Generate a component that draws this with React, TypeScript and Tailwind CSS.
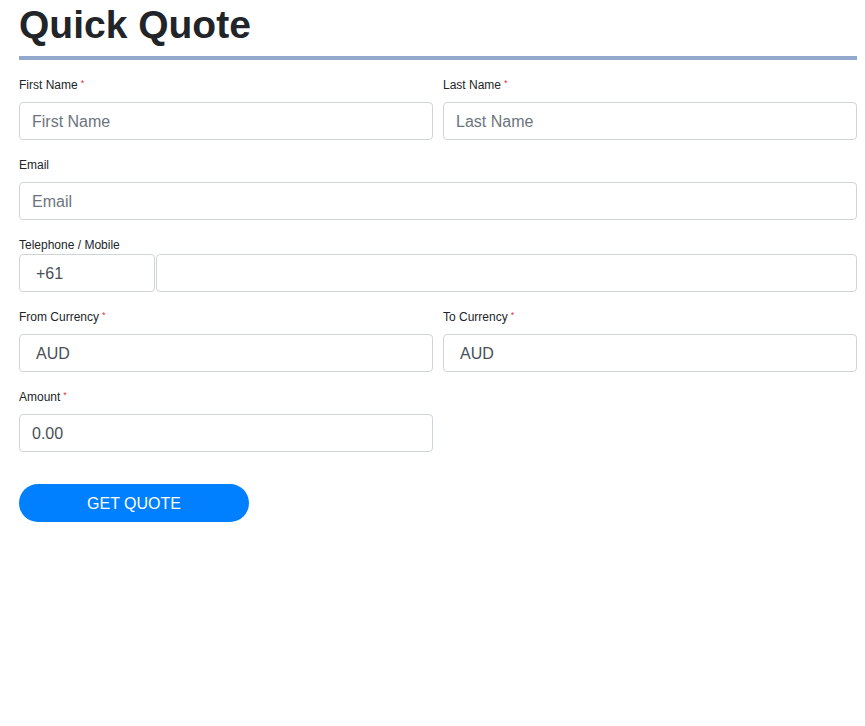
import { useState } from "react";

function Label({ text, required, tight }: { text: string; required?: boolean; tight?: boolean }) {
  return (
    <label
      className={
        "block h-[18px] text-[12px] leading-[20px] text-[#212529] " +
        (tight ? "mb-[1px]" : "mb-[9px]")
      }
    >
      {text}
      {required && (
        <span className="relative top-[-3px] ml-[3px] text-[9px] leading-none text-[#dc3545]">*</span>
      )}
    </label>
  );
}

const inputClass =
  "block h-[38px] w-full rounded-[4px] border border-[#ced4da] bg-white px-3 pt-[2px] text-[16px] text-[#495057] placeholder:text-[#6c757d] outline-none";

const boxClass =
  "flex h-[38px] items-center rounded-[4px] border border-[#ced4da] pl-4 pt-[2px] text-[16px] text-[#495057]";

export default function App() {
  const [firstName, setFirstName] = useState("");
  const [lastName, setLastName] = useState("");
  const [email, setEmail] = useState("");
  const [phone, setPhone] = useState("");
  const [amount, setAmount] = useState("0.00");

  return (
    <div className="min-h-[726px] bg-white pl-[19px] pr-[8px] font-['Liberation_Sans',Arial,sans-serif]">
      <h1 className="pt-[2px] text-[39px] leading-[46px] font-bold text-[#212529]">
        Quick Quote
      </h1>
      <div className="mt-[8px] h-[4px] bg-[#93a8cd]" />

      <div className="mt-[15px] grid grid-cols-2 gap-x-[10px]">
        <div>
          <Label text="First Name" required />
          <input
            className={inputClass}
            placeholder="First Name"
            value={firstName}
            onChange={(e) => setFirstName(e.target.value)}
          />
        </div>
        <div>
          <Label text="Last Name" required />
          <input
            className={inputClass}
            placeholder="Last Name"
            value={lastName}
            onChange={(e) => setLastName(e.target.value)}
          />
        </div>
      </div>

      <div className="mt-[15px]">
        <Label text="Email" />
        <input
          className={inputClass}
          placeholder="Email"
          value={email}
          onChange={(e) => setEmail(e.target.value)}
        />
      </div>

      <div className="mt-[15px]">
        <Label text="Telephone / Mobile" tight />
        <div className="flex gap-[1px]">
          <div className={boxClass + " w-[136px] shrink-0"}>+61</div>
          <input
            className={inputClass + " flex-1"}
            value={phone}
            onChange={(e) => setPhone(e.target.value)}
          />
        </div>
      </div>

      <div className="mt-[15px] grid grid-cols-2 gap-x-[10px]">
        <div>
          <Label text="From Currency" required />
          <div className={boxClass}>AUD</div>
        </div>
        <div>
          <Label text="To Currency" required />
          <div className={boxClass}>AUD</div>
        </div>
      </div>

      <div className="mt-[15px] w-[414px]">
        <Label text="Amount" required />
        <input
          className={inputClass}
          value={amount}
          onChange={(e) => setAmount(e.target.value)}
        />
      </div>

      <button className="mt-[32px] h-[38px] w-[230px] rounded-full bg-[#0080ff] pt-[1px] text-[16px] text-white">
        GET QUOTE
      </button>
    </div>
  );
}
